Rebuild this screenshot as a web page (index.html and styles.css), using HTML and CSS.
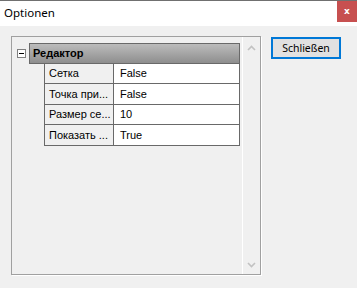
FILE: index.html
```html
<!DOCTYPE html>
<html>
<head>
<meta charset="utf-8">
<link rel="stylesheet" href="styles.css">
</head>
<body>
<div class="window">
  <div class="titlebar">
    <span class="title">Optionen</span>
    <div class="close">x</div>
  </div>
  <div class="content">
    <div class="panel">
      <div class="grid">
        <div class="cat-row">
          <div class="toggle-cell"><div class="toggle"></div></div>
          <div class="cat-header">Редактор</div>
        </div>
        <div class="props">
          <div class="prop r1"><div class="name">Сетка</div><div class="value">False</div></div>
          <div class="prop r2"><div class="name">Точка при...</div><div class="value">False</div></div>
          <div class="prop r1"><div class="name">Размер се...</div><div class="value">10</div></div>
          <div class="prop r2"><div class="name">Показать ...</div><div class="value">True</div></div>
        </div>
      </div>
      <div class="scrollbar">
        <svg class="arrow" width="9" height="6" viewBox="0 0 9 6"><path d="M1 5 L4.5 1.5 L8 5" fill="none" stroke="#c2c2c2" stroke-width="1.6"/></svg>
        <svg class="arrow" width="9" height="6" viewBox="0 0 9 6"><path d="M1 1 L4.5 4.5 L8 1" fill="none" stroke="#c2c2c2" stroke-width="1.6"/></svg>
      </div>
    </div>
    <div class="side">
      <button class="btn">Schließen</button>
    </div>
  </div>
</div>
</body>
</html>
```
FILE: styles.css
```css
html, body {
  margin: 0;
  padding: 0;
  width: 357px;
  height: 288px;
  overflow: hidden;
  background: #f0f0f0;
}
.window {
  width: 357px;
  height: 288px;
  display: flex;
  flex-direction: column;
  background: #f0f0f0;
}
.titlebar {
  height: 25px;
  border-top: 1px solid #707070;
  background: #ffffff;
  display: flex;
  align-items: flex-start;
  justify-content: space-between;
}
.title {
  font-family: "Noto Sans", sans-serif;
  font-size: 11.5px;
  color: #000;
  margin-left: 4px;
  margin-top: 4px;
  line-height: 16px;
}
.close {
  width: 20px;
  height: 21px;
  background: #c75050;
  color: #fff;
  font-family: "DejaVu Sans", sans-serif;
  font-weight: bold;
  font-size: 9px;
  line-height: 20px;
  text-align: center;
}
.content {
  display: flex;
  padding: 10px 0 0 11px;
}
.panel {
  width: 248px;
  height: 237px;
  border: 1px solid #a0a0a0;
  box-shadow: 1px 1px 0 #ffffff;
  display: flex;
}
.grid {
  flex: 1;
  padding-top: 6px;
}
.cat-row {
  display: flex;
  height: 21px;
}
.toggle-cell {
  width: 17px;
  padding-top: 6px;
}
.toggle {
  width: 7px;
  height: 7px;
  margin-left: 5px;
  border: 1px solid #808080;
  background: #fff;
  position: relative;
}
.toggle::after {
  content: "";
  position: absolute;
  left: 1px;
  top: 3px;
  width: 5px;
  height: 1px;
  background: #000;
}
.cat-header {
  height: 19px;
  border: 1px solid #696969;
  background: linear-gradient(#bcbcbc, #8e8e8e);
  font-family: "Liberation Sans", Arial, sans-serif;
  font-weight: bold;
  font-size: 11px;
  line-height: 19px;
  padding-left: 3px;
  width: 206px;
  color: #000;
}
.props {
  margin-left: 32px;
  width: 196px;
}
.prop {
  display: flex;
  border: 1px solid #696969;
  border-top: none;
  font-family: "Liberation Sans", Arial, sans-serif;
  font-size: 11px;
  color: #000;
}
.r1 { height: 19px; line-height: 19px; }
.r2 { height: 20px; line-height: 20px; }
.name {
  width: 64px;
  padding-left: 4px;
  border-right: 1px solid #696969;
  background: #f0f0f0;
  white-space: nowrap;
  overflow: hidden;
}
.value {
  flex: 1;
  padding-left: 6px;
  background: #ffffff;
}
.scrollbar {
  width: 17px;
  border-left: 1px solid #ffffff;
  display: flex;
  flex-direction: column;
  justify-content: space-between;
  align-items: center;
  padding: 8px 0 6px;
}
.arrow { display: block; }
.side {
  padding-left: 10px;
  padding-top: 1px;
}
.btn {
  width: 70px;
  height: 22px;
  border: 2px solid #0078d7;
  background: #e1e1e1;
  font-family: "Noto Sans", sans-serif;
  font-size: 10.5px;
  color: #000;
  padding: 0;
  line-height: 16px;
}
```
